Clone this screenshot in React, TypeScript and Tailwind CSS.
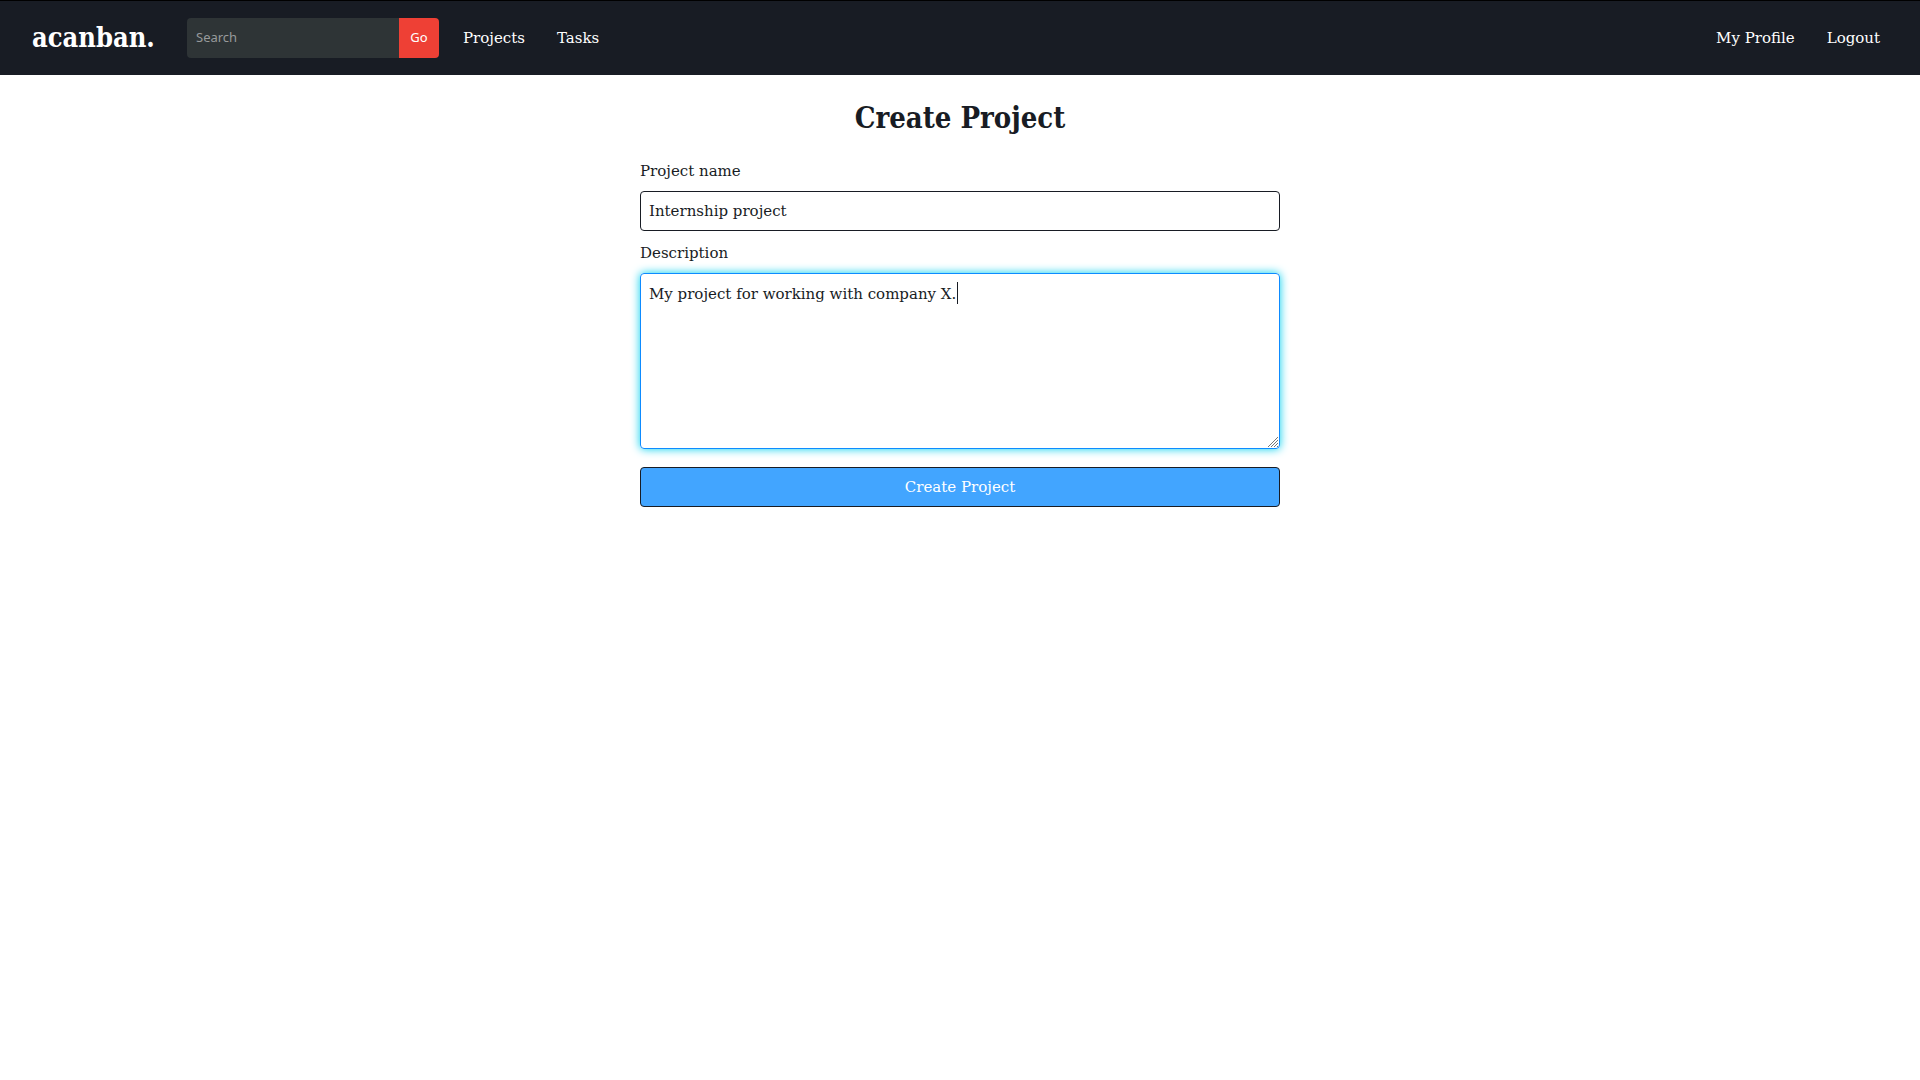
import { useEffect, useRef } from "react";

export default function App() {
  const description = useRef<HTMLTextAreaElement>(null);

  useEffect(() => {
    const field = description.current;
    if (field) {
      field.focus();
      field.setSelectionRange(field.value.length, field.value.length);
    }
  }, []);

  return (
    <div className="min-h-screen bg-white font-['Roboto_Slab','DejaVu_Serif',serif] text-[#181c24]">
      <header className="flex items-center border-t border-black bg-[#181c24] px-8 py-[17px] text-white">
        <a
          href="#"
          className="w-[123px] font-['Roboto_Slab','DejaVu_Serif_Condensed','DejaVu_Serif',serif] text-[27px] leading-10 font-bold whitespace-nowrap"
        >
          acanban.
        </a>
        <form className="ml-8 flex h-10 font-['Noto_Sans',sans-serif] text-[13px]">
          <input
            type="search"
            aria-label="Search"
            placeholder="Search"
            className="w-[212px] rounded-l bg-[#2e3436] px-[9px] outline-none placeholder:text-[#979a9b]"
          />
          <button type="button" className="w-10 rounded-r bg-[#ee4035]">
            Go
          </button>
        </form>
        <nav className="ml-6 flex flex-1 items-center gap-8 pr-2 text-[15px]">
          <a href="#">Projects</a>
          <a href="#">Tasks</a>
          <a href="#" className="ml-auto">
            My Profile
          </a>
          <a href="#">Logout</a>
        </nav>
      </header>

      <main className="mx-auto flex w-full max-w-[640px] flex-col pt-5">
        <h1 className="text-center font-['Roboto_Slab','DejaVu_Serif_Condensed','DejaVu_Serif',serif] text-[29px] leading-[46px] font-bold">
          Create Project
        </h1>
        <form className="mt-4 flex flex-col text-[15px]">
          <label htmlFor="name" className="leading-7">
            Project name
          </label>
          <input
            id="name"
            type="text"
            defaultValue="Internship project"
            className="mt-1.5 h-10 rounded border border-[#181c24] px-2 outline-none"
          />
          <label htmlFor="description" className="mt-2 leading-7">
            Description
          </label>
          <div className="relative mt-1.5 flex">
            <textarea
              id="description"
              ref={description}
              defaultValue="My project for working with company X."
              className="h-44 w-full resize-none rounded border border-[#0d8bff] px-2 py-2 leading-6 caret-transparent shadow-[0_0_10px_#00d0ee] outline-none"
            />
            {/* text cursor after the last word */}
            <span className="pointer-events-none absolute top-[9px] left-[317px] h-[22px] w-px bg-[#181c24]" />
            {/* resize grip */}
            <svg
              className="pointer-events-none absolute right-0.5 bottom-0.5"
              width="10"
              height="10"
              viewBox="0 0 10 10"
              fill="none"
              stroke="#777"
              aria-hidden="true"
            >
              <path d="M0 10L10 0M3 10L10 3M6 10L10 6M9 10L10 9" />
            </svg>
          </div>
          <button type="button" className="mt-[18px] h-10 rounded border border-[#181c24] bg-[#42a5ff] text-white">
            Create Project
          </button>
        </form>
      </main>
    </div>
  );
}
